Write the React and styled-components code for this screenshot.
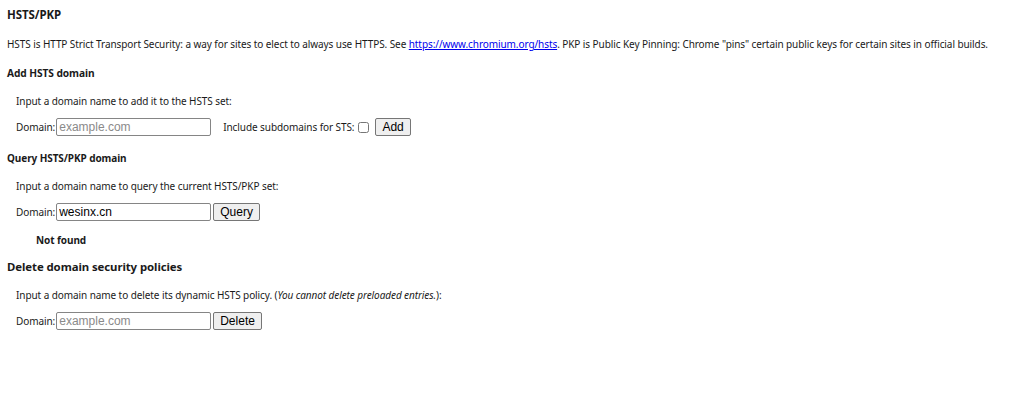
import React from 'react'
import styled, { createGlobalStyle } from 'styled-components'

/******************************************************************************/
// Global
/******************************************************************************/

const GlobalStyle = createGlobalStyle`
  body {
    margin: 0;
    background: #ffffff;
    color: #1a1a1a;
    font-family: 'Noto Sans', 'Open Sans', sans-serif;
  }
`

/******************************************************************************/
// Styled
/******************************************************************************/

const Page = styled.div`
  padding: 8px 7px 0 7px;
  width: 1024px;
  height: 407px;
  box-sizing: border-box;
  font-size: 10px;
  letter-spacing: -0.08px;
`

const Title = styled.h2`
  margin: 0;
  font-size: ${p => p.size || 11}px;
  font-weight: 700;
  line-height: 14px;
  margin-top: ${p => p.top || 0}px;
`

const Text = styled.p`
  margin: ${p => p.top || 0}px 0 0 0;
  line-height: 14px;
  white-space: nowrap;
`

const Link = styled.a`
  color: #0000ee;
  text-decoration: underline;
`

const Section = styled.div`
  padding-left: 9px;
`

const Row = styled.div`
  display: flex;
  align-items: center;
  height: 18px;
  margin-top: 10px;
`

const Input = styled.input`
  box-sizing: border-box;
  width: 155px;
  height: 18px;
  margin: 0 0 0 1px;
  padding: 1px 2px;
  border: 1px solid #858585;
  border-radius: 2px;
  font-family: 'Liberation Sans', Arial, sans-serif;
  font-size: 12px;
  letter-spacing: 0;
  color: #000;
  &::placeholder { color: #8a8a8a; }
`

const Checkbox = styled.input.attrs({ type: 'checkbox' })`
  width: 11px;
  height: 11px;
  margin: 0 4px 0 4px;
`

const Button = styled.button`
  box-sizing: border-box;
  height: 18px;
  margin: 0 0 0 ${p => p.gap || 2}px;
  padding: 0 6px;
  border: 1px solid #767676;
  border-radius: 2px;
  background: #efefef;
  font-family: 'Liberation Sans', Arial, sans-serif;
  font-size: 12px;
  letter-spacing: 0;
  color: #000;
`

const Sub = styled.span`
  margin-left: 12px;
`

const Result = styled.div`
  margin-top: 12px;
  padding-left: 29px;
  font-weight: 700;
  line-height: 14px;
`

/******************************************************************************/
// Main Component
/******************************************************************************/

const App = () =>
  <Page>
    <GlobalStyle/>
    <Title size={11.5}>HSTS/PKP</Title>
    <Text top={15}>
      HSTS is HTTP Strict Transport Security: a way for sites to elect to always use HTTPS. See{' '}
      <Link href='#'>https://www.chromium.org/hsts</Link>. PKP is Public Key Pinning: Chrome "pins" certain
      public keys for certain sites in official builds.
    </Text>

    <Title size={10.2} top={15}>Add HSTS domain</Title>
    <Section>
      <Text top={14}>Input a domain name to add it to the HSTS set:</Text>
      <Row>
        <span>Domain:</span>
        <Input placeholder='example.com'/>
        <Sub>Include subdomains for STS:</Sub>
        <Checkbox/>
        <Button gap={0}>Add</Button>
      </Row>
    </Section>

    <Title size={10} top={15}>Query HSTS/PKP domain</Title>
    <Section>
      <Text top={14}>Input a domain name to query the current HSTS/PKP set:</Text>
      <Row>
        <span>Domain:</span>
        <Input defaultValue='wesinx.cn'/>
        <Button>Query</Button>
      </Row>
    </Section>
    <Result>Not found</Result>

    <Title size={11.4} top={13}>Delete domain security policies</Title>
    <Section>
      <Text top={14}>
        Input a domain name to delete its dynamic HSTS policy. (<i>You cannot delete preloaded entries.</i>):
      </Text>
      <Row>
        <span>Domain:</span>
        <Input placeholder='example.com'/>
        <Button>Delete</Button>
      </Row>
    </Section>
  </Page>

/******************************************************************************/
// Exports
/******************************************************************************/

export default App
